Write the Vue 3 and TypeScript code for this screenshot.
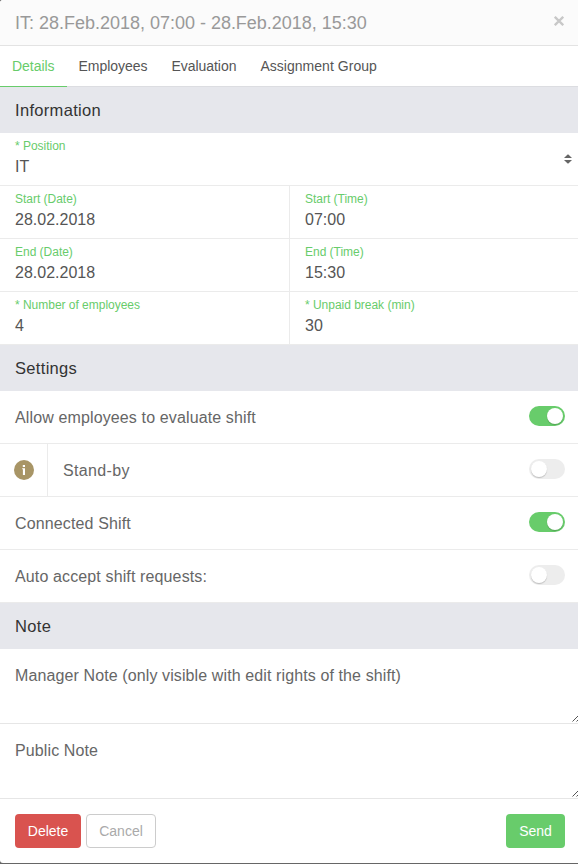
<script setup lang="ts">
import { ref } from 'vue'

interface Field {
  label: string
  value: string
}

interface Setting {
  label: string
  on: boolean
  info?: boolean
}

const tabs = ['Details', 'Employees', 'Evaluation', 'Assignment Group']
const activeTab = ref('Details')

const fields: Field[] = [
  { label: 'Start (Date)', value: '28.02.2018' },
  { label: 'Start (Time)', value: '07:00' },
  { label: 'End (Date)', value: '28.02.2018' },
  { label: 'End (Time)', value: '15:30' },
  { label: '* Number of employees', value: '4' },
  { label: '* Unpaid break (min)', value: '30' },
]

const settings = ref<Setting[]>([
  { label: 'Allow employees to evaluate shift', on: true },
  { label: 'Stand-by', on: false, info: true },
  { label: 'Connected Shift', on: true },
  { label: 'Auto accept shift requests:', on: false },
])

const notes = ['Manager Note (only visible with edit rights of the shift)', 'Public Note']
</script>

<template>
  <div class="modal">
    <header class="header">
      <h1 class="title">IT: 28.Feb.2018, 07:00 - 28.Feb.2018, 15:30</h1>
      <button class="close" aria-label="Close">
        <svg width="10" height="10" viewBox="0 0 10 10"><path d="M.8 .8 9.2 9.2M9.2 .8 .8 9.2" /></svg>
      </button>
    </header>

    <nav class="tabs">
      <button
        v-for="tab in tabs"
        :key="tab"
        class="tab"
        :class="{ active: tab === activeTab }"
        @click="activeTab = tab"
      >{{ tab }}</button>
    </nav>

    <h2 class="section">Information</h2>
    <div class="fields">
      <div class="field wide">
        <div class="field-text">
          <span class="label">* Position</span>
          <span class="value">IT</span>
        </div>
        <svg class="sort" width="8" height="10" viewBox="0 0 8 10"><path d="M3.6 .5H4.4L8 4H0ZM0 6H8L4.4 9.5H3.6Z" /></svg>
      </div>
      <div v-for="field in fields" :key="field.label" class="field">
        <div class="field-text">
          <span class="label">{{ field.label }}</span>
          <span class="value">{{ field.value }}</span>
        </div>
      </div>
    </div>

    <h2 class="section">Settings</h2>
    <div v-for="item in settings" :key="item.label" class="setting">
      <div v-if="item.info" class="info">
        <svg width="20" height="20" viewBox="0 0 20 20">
          <circle cx="10" cy="10" r="10" fill="#a89566" />
          <path d="M8.8 5h2.2v2H8.8ZM8.2 8.3H11V15H8.9V9.3H8.2Z" fill="#fff" />
        </svg>
      </div>
      <span class="setting-label">{{ item.label }}</span>
      <button class="switch" :class="{ on: item.on }" :aria-label="item.label" @click="item.on = !item.on">
        <span class="knob"></span>
      </button>
    </div>

    <h2 class="section">Note</h2>
    <div v-for="note in notes" :key="note" class="note">
      <span>{{ note }}</span>
      <svg class="grip" width="8" height="8" viewBox="0 0 8 8"><path d="M.5 7.5 8 0M4.5 7.5 8 4" /></svg>
    </div>

    <footer class="footer">
      <button class="btn delete">Delete</button>
      <button class="btn cancel">Cancel</button>
      <button class="btn send">Send</button>
    </footer>
  </div>
</template>

<style>
body {
  background: #666;
}
</style>

<style scoped>
.modal {
  height: 863px;
  box-sizing: border-box;
  background: #fff;
  border-radius: 3px 0 0 3px;
  overflow: hidden;
  font-family: "Liberation Sans", Arial, sans-serif;
  font-size: 16px;
  color: #666;
}
.modal *,
.modal *::before {
  box-sizing: border-box;
}
button {
  border: 0;
  padding: 0;
  background: none;
  font: inherit;
}
.header {
  display: flex;
  justify-content: space-between;
  height: 46px;
  padding: 0 14px 0 15px;
  background: #fbfbfb;
  border-bottom: 1px solid #e3e3e3;
}
.title {
  margin: 0;
  font-size: 18px;
  font-weight: 400;
  line-height: 46px;
  letter-spacing: -0.01px;
  color: #999;
}
.close {
  height: 10px;
  margin-top: 16px;
  line-height: 0;
}
.close path {
  stroke: #c8c8c8;
  stroke-width: 2.3;
}
.tabs {
  display: flex;
  height: 41px;
  border-bottom: 1px solid #dcdde1;
}
.tab {
  height: 41px;
  padding: 0 12px;
  border-bottom: 1px solid transparent;
  font-size: 14px;
  letter-spacing: -0.04px;
  color: #555;
}
.tab:last-child {
  letter-spacing: 0.03px;
}
.tab.active {
  color: #68cc6b;
  border-color: #68cc6b;
}
.section {
  margin: 0;
  height: 46px;
  padding-left: 15px;
  background: #e6e7ec;
  font-size: 16.5px;
  font-weight: 400;
  line-height: 47px;
  letter-spacing: 0.32px;
  color: #333;
}
.fields {
  display: grid;
  grid-template-columns: 290px 1fr;
}
.field {
  display: flex;
  justify-content: space-between;
  align-items: center;
  height: 53px;
  padding: 0 6px 0 15px;
  border-bottom: 1px solid #ebebeb;
}
.field.wide {
  grid-column: span 2;
}
.field:nth-child(even) {
  border-right: 1px solid #ebebeb;
}
.field-text {
  display: flex;
  flex-direction: column;
  padding-bottom: 2px;
}
.label {
  font-size: 12px;
  line-height: 18px;
  letter-spacing: -0.02px;
  color: #68cc6b;
}
.value {
  line-height: 24px;
  color: #555;
}
.sort {
  fill: #666;
}
.setting {
  display: flex;
  align-items: center;
  height: 53px;
  padding-right: 13px;
  border-bottom: 1px solid #ebebeb;
}
.info {
  display: flex;
  align-items: center;
  width: 48px;
  height: 52px;
  padding-left: 14px;
  border-right: 1px solid #ebebeb;
}
.setting-label {
  flex: 1;
  padding: 2px 0 0 15px;
  letter-spacing: 0.13px;
}
.info + .setting-label {
  letter-spacing: 0.35px;
}
.switch {
  width: 36px;
  height: 20px;
  margin-bottom: 2px;
  padding: 0 2px;
  border-radius: 10px;
  background: #ededed;
}
.knob {
  display: block;
  width: 16px;
  height: 16px;
  border-radius: 50%;
  background: #fff;
  box-shadow: 0 1px 1px rgba(0, 0, 0, 0.2);
}
.switch.on {
  background: #68cc6b;
}
.on .knob {
  margin-left: 16px;
}
.note {
  display: flex;
  justify-content: space-between;
  height: 75px;
  padding-left: 15px;
  border-bottom: 1px solid #e6e6e6;
  line-height: 54px;
  letter-spacing: 0.11px;
}
.grip {
  align-self: flex-end;
  margin-right: -2px;
  margin-bottom: 1px;
  fill: none;
  stroke: #555;
  stroke-width: 1;
}
.footer {
  display: flex;
  gap: 5px;
  padding: 15px 13px 15px 15px;
}
.btn {
  height: 34px;
  border-radius: 4px;
  font-size: 14px;
  color: #fff;
}
.delete {
  width: 66px;
  background: #d9534f;
}
.cancel {
  width: 70px;
  border: 1px solid #ccc;
  color: #aaa;
}
.send {
  width: 59px;
  margin-left: auto;
  background: #68cc6b;
}
</style>
